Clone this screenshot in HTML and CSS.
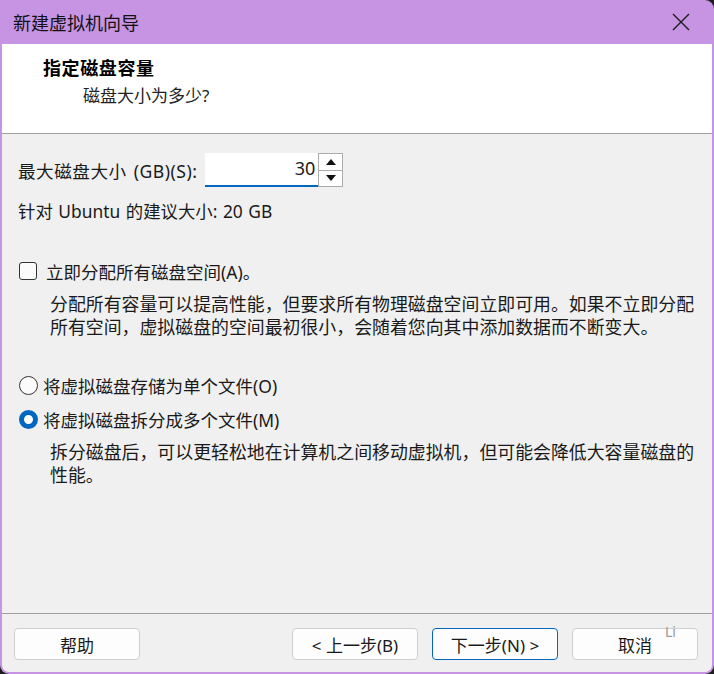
FILE: index.html
```html
<!DOCTYPE html>
<html>
  <head>
    <meta charset="utf-8" />
    <link rel="stylesheet" href="styles.css">
  </head>
  <body>
    <div class="window">
      <div class="titlebar">
        <span class="title">新建虚拟机向导</span>
        <svg class="close" width="18" height="18" viewBox="0 0 18 18">
          <path d="M1 1 L17 17 M17 1 L1 17" stroke="#1c1c1c" stroke-width="1.4" fill="none" />
        </svg>
      </div>

      <div class="content">
        <div class="header">
          <div class="heading">指定磁盘容量</div>
          <div class="subheading">磁盘大小为多少?</div>
        </div>

        <div class="main">
          <div class="size-row">
            <label class="size-label">最大磁盘大小 (GB)(S):</label>
            <div class="spinner">
              <div class="spin-input">30</div>
              <div class="spin-buttons">
                <div class="spin-btn">
                  <svg width="10" height="6" viewBox="0 0 10 6"><path d="M0 6 L5 0 L10 6 Z" fill="#111" /></svg>
                </div>
                <div class="spin-btn">
                  <svg width="10" height="6" viewBox="0 0 10 6"><path d="M0 0 L5 6 L10 0 Z" fill="#111" /></svg>
                </div>
              </div>
            </div>
          </div>
          <div class="hint">针对 Ubuntu 的建议大小: 20 GB</div>

          <div class="option option-check">
            <span class="checkbox"></span>
            <span>立即分配所有磁盘空间(A)。</span>
          </div>
          <p class="desc">
            分配所有容量可以提高性能，但要求所有物理磁盘空间立即可用。如果不立即分配<br>所有空间，虚拟磁盘的空间最初很小，会随着您向其中添加数据而不断变大。
          </p>

          <div class="option option-first">
            <span class="radio"></span>
            <span>将虚拟磁盘存储为单个文件(O)</span>
          </div>
          <div class="option option-second">
            <span class="radio checked"></span>
            <span>将虚拟磁盘拆分成多个文件(M)</span>
          </div>
          <p class="desc">
            拆分磁盘后，可以更轻松地在计算机之间移动虚拟机，但可能会降低大容量磁盘的<br>性能。
          </p>
        </div>

        <div class="footer">
          <button>帮助</button>
          <div class="footer-right">
            <button>&lt; 上一步(B)</button>
            <button class="primary">下一步(N) &gt;</button>
            <button>取消</button>
          </div>
          <span class="ime">Li</span>
        </div>
      </div>
    </div>
  </body>
</html>
```

FILE: styles.css
```css
* {
  box-sizing: border-box;
  margin: 0;
  padding: 0;
}

body {
  background: #1e1e1e;
  font-family: "Noto Sans", "Noto Sans CJK SC", sans-serif;
  color: #1a1a1a;
}

.window {
  width: 714px;
  height: 674px;
  display: flex;
  flex-direction: column;
  background: #c793e3;
  border-radius: 0 9px 9px 9px;
  overflow: hidden;
}

.titlebar {
  height: 44px;
  display: flex;
  align-items: center;
  justify-content: space-between;
  padding: 0 24px 0 13px;
}

.title {
  font-size: 18px;
  color: #111;
}

.close {
  display: block;
}

.content {
  flex: 1;
  margin: 0 2px 2px;
  background: #f0f0f0;
  border-radius: 0 0 7px 7px;
  display: flex;
  flex-direction: column;
}

.header {
  height: 90px;
  background: #fff;
  border-bottom: 1px solid #a0a0a0;
  padding: 12px 0 0 41px;
}

.heading {
  font-size: 18px;
  font-weight: 700;
  line-height: 24px;
  color: #000;
  letter-spacing: 0.6px;
}

.subheading {
  font-size: 17px;
  line-height: 24px;
  margin-top: 4px;
  padding-left: 40px;
  color: #222;
}

.main {
  flex: 1;
  padding: 19px 16px 0;
}

.size-row {
  display: flex;
  align-items: center;
  height: 34px;
}

.size-label {
  font-size: 17.6px;
  letter-spacing: 0.5px;
  word-spacing: 2px;
  margin-right: 8px;
}

.spinner {
  display: flex;
  height: 34px;
}

.spin-input {
  width: 113px;
  background: #fff;
  border-bottom: 2px solid #0067c0;
  font-size: 18px;
  text-align: right;
  padding: 3px 3px 0 0;
}

.spin-buttons {
  width: 25px;
  display: flex;
  flex-direction: column;
  border: 1px solid #acacac;
  background: #fff;
}

.spin-btn {
  flex: 1;
  display: flex;
  align-items: center;
  justify-content: center;
}

.spin-btn + .spin-btn {
  border-top: 1px solid #acacac;
}

.hint {
  font-size: 17.4px;
  word-spacing: 1px;
  line-height: 24px;
  margin-top: 12px;
}

.option {
  display: flex;
  align-items: center;
  height: 24px;
  font-size: 17.5px;
}

.option-check {
  margin-top: 36px;
}

.option-first {
  margin-top: 35px;
}

.option-second {
  margin-top: 10px;
}

.checkbox {
  width: 18px;
  height: 18px;
  border: 1px solid #333;
  border-radius: 3px;
  background: #fbfbfb;
  margin: 0 9px 0 1px;
}

.radio {
  width: 19px;
  height: 19px;
  border: 1px solid #333;
  border-radius: 50%;
  background: #fbfbfb;
  margin: 0 5px 0 1px;
}

.radio.checked {
  border: 5.5px solid #0067c0;
  background: #fff;
}

.desc {
  font-size: 17.9px;
  line-height: 23px;
  margin-top: 9.5px;
  padding-left: 32px;
  color: #1a1a1a;
  white-space: nowrap;
}

.footer {
  position: relative;
  border-top: 1px solid #a0a0a0;
  padding: 14px 14px 12px 12px;
  display: flex;
  justify-content: space-between;
}

.footer-right {
  display: flex;
  gap: 14px;
}

button {
  width: 126px;
  height: 32px;
  background: #fdfdfd;
  border: 1px solid #d0d0d0;
  border-radius: 4px;
  font-family: "Noto Sans", "Noto Sans CJK SC", sans-serif;
  font-size: 17px;
  color: #1a1a1a;
}

button.primary {
  border-color: #0067c0;
}

.ime {
  position: absolute;
  top: 8px;
  left: 663px;
  font-size: 14px;
  color: #9a9a9a;
}
```
